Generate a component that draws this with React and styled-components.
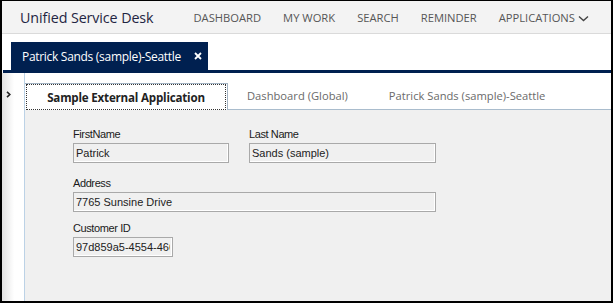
import React from "react";
import styled, { createGlobalStyle } from "styled-components";

const GlobalStyle = createGlobalStyle`
  body {
    margin: 0;
    background: #fff;
    font-family: "Open Sans", "Noto Sans", sans-serif;
  }
`;

const navItems = ["DASHBOARD", "MY WORK", "SEARCH", "REMINDER"];

const App = () => {
  return (
    <>
      <GlobalStyle />
      <Frame>
        <Header>
          <Title>Unified Service Desk</Title>
          <Nav>
            {navItems.map((item) => (
              <NavItem key={item}>{item}</NavItem>
            ))}
            <NavItem>
              APPLICATIONS
              <svg width="11" height="7" viewBox="0 0 11 7">
                <polyline points="1,1.5 5.5,5.5 10,1.5" fill="none" stroke="#444" strokeWidth="1.4" />
              </svg>
            </NavItem>
          </Nav>
        </Header>

        <SessionBar>
          <SessionTab>
            <SessionName>Patrick Sands (sample)-Seattle</SessionName>
            <svg width="8" height="8" viewBox="0 0 8 8">
              <path d="M1 1 L7 7 M7 1 L1 7" stroke="#fff" strokeWidth="1.8" />
            </svg>
          </SessionTab>
        </SessionBar>
        <NavyRule />

        <Workspace>
          <SideRail>
            <svg width="5" height="7" viewBox="0 0 5 7">
              <polyline points="1,0.8 3.8,3.5 1,6.2" fill="none" stroke="#222" strokeWidth="1.6" />
            </svg>
          </SideRail>
          <Main>
            <TabStrip>
              <ActiveTab>
                <FocusBox>Sample External Application</FocusBox>
              </ActiveTab>
              <Tab $pl={19}>Dashboard (Global)</Tab>
              <Tab $pl={21}>Patrick Sands (sample)-Seattle</Tab>
            </TabStrip>
            <Content>
              <Row>
                <Field $w={156}>
                  <Label>FirstName</Label>
                  <Input readOnly value="Patrick" />
                </Field>
                <Field $w={187}>
                  <Label>Last Name</Label>
                  <Input readOnly value="Sands (sample)" />
                </Field>
              </Row>
              <Row $mt={13}>
                <Field $w={363}>
                  <Label>Address</Label>
                  <Input readOnly value="7765 Sunsine Drive" />
                </Field>
              </Row>
              <Row $mt={9}>
                <Field $w={100}>
                  <Label>Customer ID</Label>
                  <Input readOnly value="97d859a5-4554-4668-8b5e-2c0f5a7d1e3b" />
                </Field>
              </Row>
            </Content>
          </Main>
        </Workspace>
      </Frame>
    </>
  );
};

const Frame = styled.div`
  width: 613px;
  height: 303px;
  box-sizing: border-box;
  border-style: solid;
  border-color: #000;
  border-width: 1px 2px 2px 2px;
  display: flex;
  flex-direction: column;
  background: #fff;
  overflow: hidden;
`;

const Header = styled.div`
  height: 32px;
  flex-shrink: 0;
  background: #f3f3f3;
  border-bottom: 1px solid #dadada;
  display: flex;
  align-items: center;
  padding-left: 18px;
`;

const Title = styled.div`
  font-size: 14.3px;
  color: #1f2542;
  letter-spacing: -0.1px;
`;

const Nav = styled.div`
  display: flex;
  align-items: center;
  gap: 22px;
  margin-left: 40px;
`;

const NavItem = styled.div`
  display: flex;
  align-items: center;
  gap: 3px;
  font-size: 11.2px;
  color: #565656;

  svg {
    display: block;
    margin-top: 2px;
  }
`;

const SessionBar = styled.div`
  height: 36px;
  flex-shrink: 0;
  display: flex;
  align-items: flex-end;
  padding-left: 9px;
`;

const SessionTab = styled.div`
  height: 28px;
  box-sizing: border-box;
  background: #002050;
  color: #fff;
  display: flex;
  align-items: center;
  gap: 13px;
  padding: 0 6px 0 11px;

  svg {
    display: block;
  }
`;

const SessionName = styled.span`
  font-size: 12px;
  letter-spacing: -0.3px;
  white-space: nowrap;
`;

const NavyRule = styled.div`
  height: 3px;
  flex-shrink: 0;
  margin-left: 1px;
  background: #002050;
`;

const Workspace = styled.div`
  flex: 1;
  display: flex;
  min-height: 0;
`;

const SideRail = styled.div`
  width: 23px;
  flex-shrink: 0;
  border-right: 1px solid #bcd2e6;
  background: linear-gradient(to right, #e2e2e2, #fff 55%);
  padding: 18px 0 0 4px;
  box-sizing: border-box;

  svg {
    display: block;
  }
`;

const Main = styled.div`
  flex: 1;
  display: flex;
  flex-direction: column;
`;

const TabStrip = styled.div`
  height: 37px;
  flex-shrink: 0;
  box-sizing: border-box;
  border-bottom: 1px solid #a9bccd;
  display: flex;
  align-items: flex-end;
  background: #fff;
`;

const ActiveTab = styled.div`
  width: 203px;
  height: 27px;
  box-sizing: border-box;
  margin-bottom: -1px;
  border: 1px solid #a3b3c3;
  border-left: none;
  border-bottom: none;
  background: #fff;
  display: flex;
  padding: 0 1px;
`;

const FocusBox = styled.div`
  flex: 1;
  border: 1px dotted #333;
  display: flex;
  align-items: center;
  justify-content: center;
  font-size: 11.6px;
  font-weight: 700;
  color: #222;
  letter-spacing: -0.2px;
`;

const Tab = styled.div`
  height: 27px;
  display: flex;
  align-items: center;
  padding: 0 20px 0 ${(p) => p.$pl}px;
  font-size: 11.2px;
  color: #6a6a6a;
`;

const Content = styled.div`
  flex: 1;
  background: #f0f0f0;
  padding: 17px 0 0 48px;
  display: flex;
  flex-direction: column;
`;

const Row = styled.div`
  display: flex;
  gap: 20px;
  margin-top: ${(p) => p.$mt || 0}px;
`;

const Field = styled.div`
  width: ${(p) => p.$w}px;
  display: flex;
  flex-direction: column;
  gap: 2px;
`;

const Label = styled.div`
  font-family: "Liberation Sans", Arial, sans-serif;
  font-size: 11px;
  line-height: 14px;
  color: #1a1a1a;
  letter-spacing: -0.4px;
`;

const Input = styled.input`
  width: 100%;
  height: 20px;
  box-sizing: border-box;
  margin: 0;
  padding: 0 2px;
  border: 1px solid #a9a9a9;
  box-shadow: inset -1px -1px 0 #fff;
  background: #f0f0f0;
  font-family: "Liberation Sans", Arial, sans-serif;
  font-size: 11px;
  color: #222;
  outline: none;
`;

export default App;
